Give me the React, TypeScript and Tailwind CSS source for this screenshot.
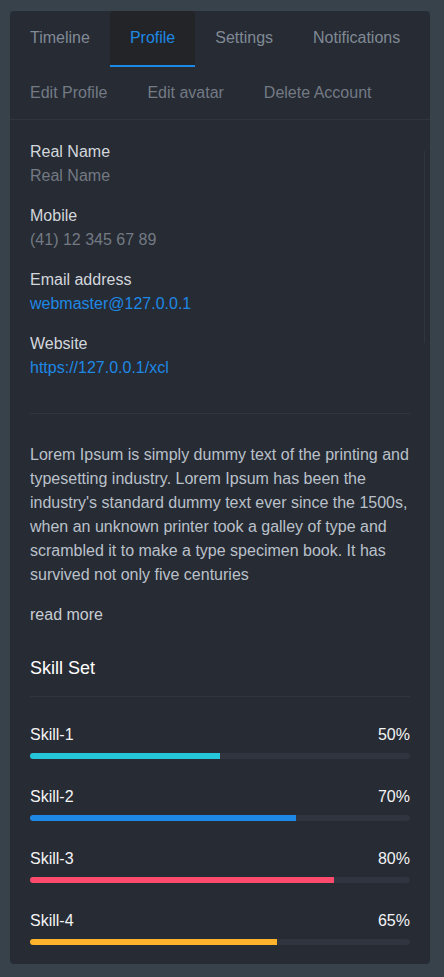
import type { ReactNode } from 'react'

const tabs = ['Timeline', 'Profile', 'Settings', 'Notifications']
const actions = ['Edit Profile', 'Edit avatar', 'Delete Account']

const details: { label: string; value: string; link?: boolean }[] = [
  { label: 'Real Name', value: 'Real Name' },
  { label: 'Mobile', value: '(41) 12 345 67 89' },
  { label: 'Email address', value: 'webmaster@127.0.0.1', link: true },
  { label: 'Website', value: 'https://127.0.0.1/xcl', link: true },
]

const skills = [
  { name: 'Skill-1', value: 50, bar: 'bg-[#26c6da]' },
  { name: 'Skill-2', value: 70, bar: 'bg-[#1e88e5]' },
  { name: 'Skill-3', value: 80, bar: 'bg-[#fc4b6c]' },
  { name: 'Skill-4', value: 65, bar: 'bg-[#ffb22b]' },
]

function Field({ label, children }: { label: string; children: ReactNode }) {
  return (
    <div className="mb-4 leading-6">
      <div className="text-[#d3d7dc]">{label}</div>
      {children}
    </div>
  )
}

export default function App() {
  return (
    <div
      className="min-h-screen bg-[#37424b] pl-[10px] pr-[14px] pt-[11px] pb-[14px] text-base"
      style={{ fontFamily: '"Liberation Sans", Arial, sans-serif' }}
    >
      <div className="relative rounded bg-[#272b34]">
        {/* main tabs */}
        <nav className="flex">
          {tabs.map((t) => {
            const active = t === 'Profile'
            return (
              <div
                key={t}
                className={`flex h-[56px] items-center border-b-2 px-5 leading-6 ${
                  active
                    ? 'rounded-t border-[#1e88e5] bg-[#222427] text-[#1e88e5]'
                    : 'border-transparent text-[#808a95]'
                }`}
              >
                {t}
              </div>
            )
          })}
        </nav>

        {/* sub actions */}
        <div className="flex border-b border-[#30353e] py-[14px] leading-6 text-[#737a84]">
          {actions.map((a) => (
            <div key={a} className="px-5">
              {a}
            </div>
          ))}
        </div>

        {/* scroll rail */}
        <div className="absolute right-[5px] top-[140px] h-[192px] w-px bg-[#30353e]" />

        <div className="px-5 pt-5 pb-[19px]">
          {details.map((d) => (
            <Field key={d.label} label={d.label}>
              <div className={d.link ? 'text-[#1e88e5]' : 'text-[#737a83]'}>{d.value}</div>
            </Field>
          ))}

          <hr className="mt-[33px] border-[#30353e]" />

          <p className="mt-[29px] leading-6 text-[#bac1ca]">
            Lorem Ipsum is simply dummy text of the printing and typesetting industry. Lorem
            Ipsum has been the industry's standard dummy text ever since the 1500s, when an
            unknown printer took a galley of type and scrambled it to make a type specimen
            book. It has survived not only five centuries
          </p>
          <div className="mt-4 leading-6 text-[#c8cdd3]">read more</div>

          <h4 className="mt-[29px] text-[18px] leading-6 text-white">Skill Set</h4>
          <hr className="mt-4 border-[#30353e]" />

          <div className="mt-[26px] flex flex-col gap-[26px]">
            {skills.map((s) => (
              <div key={s.name}>
                <div className="flex justify-between leading-6 text-[#f4f4f4]">
                  <span>{s.name}</span>
                  <span>{s.value}%</span>
                </div>
                <div className="mt-[6px] h-[6px] overflow-hidden rounded bg-[#30343e]">
                  <div className={`h-full ${s.bar}`} style={{ width: `${s.value}%` }} />
                </div>
              </div>
            ))}
          </div>
        </div>
      </div>
    </div>
  )
}
